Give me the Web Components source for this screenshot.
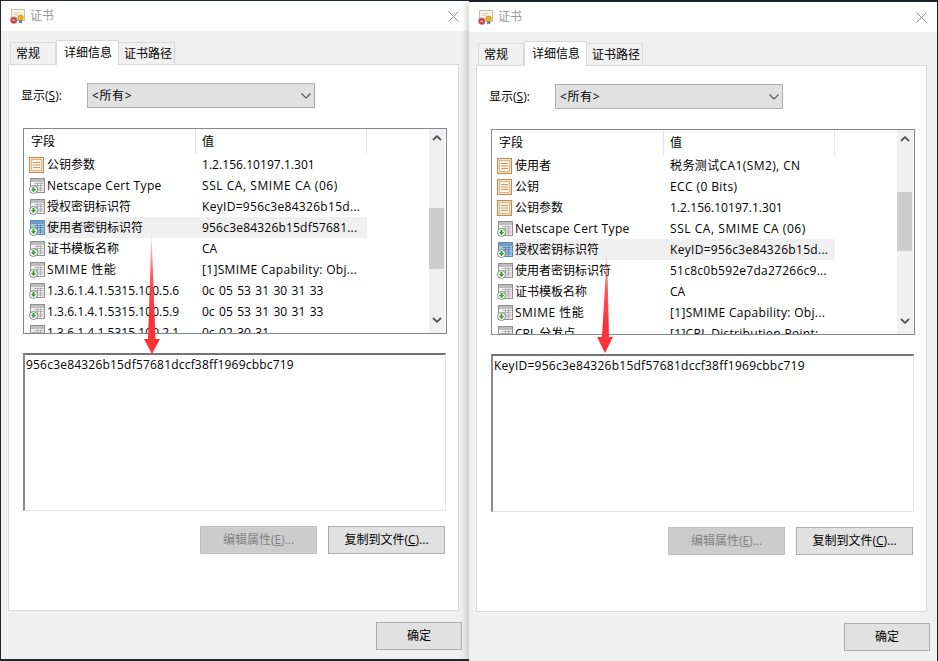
<!DOCTYPE html>
<html lang="zh-CN"><head><meta charset="utf-8"><title>证书</title>
<style>
html,body{margin:0;padding:0;background:#1d2730}
body{width:938px;height:661px;overflow:hidden;font:12px/16px "Open Sans","Noto Sans CJK SC",sans-serif;color:#000}
</style></head><body>
<cert-desktop>
  <cert-window style="left:1px;top:1px;height:658px">
    <cert-tabs></cert-tabs>
    <cert-select slot="select"></cert-select>
    <field-list thumb-top="79" thumb-height="61">
      <field-row icon="prop" name="公钥参数" value="1.2.156.10197.1.301" style="--vls:.05px"></field-row>
      <field-row icon="ext" name="Netscape Cert Type" value="SSL CA, SMIME CA (06)" style="--nls:.33px;--vls:.55px"></field-row>
      <field-row icon="ext" name="授权密钥标识符" value="KeyID=956c3e84326b15d..." style="--vls:.3px"></field-row>
      <field-row icon="ext" selected name="使用者密钥标识符" value="956c3e84326b15df57681..." style="--vls:.2px"></field-row>
      <field-row icon="ext" name="证书模板名称" value="CA"></field-row>
      <field-row icon="ext" name="SMIME 性能" value="[1]SMIME Capability: Obj..." style="--nls:.5px;--vls:.33px"></field-row>
      <field-row icon="ext" name="1.3.6.1.4.1.5315.100.5.6" value="0c 05 53 31 30 31 33" style="--nls:.04px;--vws:1.3px"></field-row>
      <field-row icon="ext" name="1.3.6.1.4.1.5315.100.5.9" value="0c 05 53 31 30 31 33" style="--nls:.04px;--vws:1.3px"></field-row>
      <field-row icon="ext" name="1.3.6.1.4.1.5315.100.2.1" value="0c 02 30 31" style="--nls:.04px;--vws:1.3px"></field-row>
    </field-list>
    <detail-box style="letter-spacing:.2px">956c3e84326b15df57681dccf38ff1969cbbc719</detail-box>
  </cert-window>
  <cert-window style="left:469px;top:2px;height:659px" shadowed>
    <cert-tabs></cert-tabs>
    <cert-select slot="select"></cert-select>
    <field-list thumb-top="62" thumb-height="59">
      <field-row icon="prop" name="使用者" value="税务测试CA1(SM2), CN" style="--vls:.4px"></field-row>
      <field-row icon="prop" name="公钥" value="ECC (0 Bits)" style="--vls:.4px"></field-row>
      <field-row icon="prop" name="公钥参数" value="1.2.156.10197.1.301" style="--vls:.05px"></field-row>
      <field-row icon="ext" name="Netscape Cert Type" value="SSL CA, SMIME CA (06)" style="--nls:.33px;--vls:.55px"></field-row>
      <field-row icon="ext" selected name="授权密钥标识符" value="KeyID=956c3e84326b15d..." style="--vls:.3px"></field-row>
      <field-row icon="ext" name="使用者密钥标识符" value="51c8c0b592e7da27266c9..." style="--vls:.25px"></field-row>
      <field-row icon="ext" name="证书模板名称" value="CA"></field-row>
      <field-row icon="ext" name="SMIME 性能" value="[1]SMIME Capability: Obj..." style="--nls:.5px;--vls:.33px"></field-row>
      <field-row icon="ext" name="CRL 分发点" value="[1]CRL Distribution Point:..." style="--vls:.3px"></field-row>
    </field-list>
    <detail-box style="letter-spacing:.26px">KeyID=956c3e84326b15df57681dccf38ff1969cbbc719</detail-box>
  </cert-window>
  <red-arrow style="left:140px;top:230px" points="11.5,3 15.5,109 20,109 12,124 4,109 8,109"></red-arrow>
  <red-arrow style="left:593px;top:248px" points="14,4 16,89 20,89 12,105 4,89 9,89"></red-arrow>
</cert-desktop>
<script>
const def=(name,html,extra)=>{
  const t=document.createElement('template');t.innerHTML=html;
  customElements.define(name,class extends HTMLElement{
    constructor(){super();this.attachShadow({mode:'open'}).appendChild(t.content.cloneNode(true));}
    connectedCallback(){if(extra)extra.call(this,this.shadowRoot);}
  });
};
def('cert-desktop',`<style>:host{display:block;position:relative;width:938px;height:661px;overflow:hidden}</style><slot></slot>`);

def('cert-icon',`<style>:host{display:block;width:16px;height:16px;flex:none}svg{display:block}</style>
<svg width="16" height="16" viewBox="0 0 16 16"></svg>`,function(r){
  const k=this.getAttribute('kind'),s=r.querySelector('svg');
  if(k==='prop'||k==='prop-sel'){
    s.innerHTML=`<rect x=".5" y=".5" width="14" height="15" fill="#fbe0c2" stroke="#bf8a55"/>
    <rect x="2.5" y="2.5" width="10" height="11" fill="#fff4e6" stroke="#dcb287"/>
    <path d="M4 5.5h7M4 8h7M4 10.5h7" stroke="#c99a68" stroke-width="1"/>`;
  }else if(k==='title'){
    s.innerHTML=`<rect x="1.5" y="1.5" width="13" height="11" fill="#f6f2e6" stroke="#c9bfa6"/>
    <path d="M4 4.5h6M4 6.5h4" stroke="#d8d2c2"/>
    <path d="M9.5 12l-.7 3.5 1.8-1 1.8 1-.7-3.5z" fill="#3f6fc4"/>
    <circle cx="10.5" cy="9.8" r="2.8" fill="#e6b422" stroke="#b98a14" stroke-width=".6"/>
    <circle cx="3.8" cy="12.2" r="3.3" fill="#d8343c" stroke="#8f8f8f" stroke-width=".7"/>
    <path d="M2.4 12.2h2.8" stroke="#fff" stroke-width="1"/>`;
  }else{
    const sel=k==='ext-sel';
    const st=sel?'#5f8db8':'#8f8f8f',fl=sel?'#a9c8e4':'#f1f1f1',hd=sel?'#6f9cc6':'#bdbdbd',ln=sel?'#4f7ea8':'#a5a5a5';
    s.innerHTML=`<rect x="1.5" y=".5" width="14" height="14" fill="${fl}" stroke="${st}"/>
    <rect x="2" y="1" width="13" height="3" fill="${hd}"/>
    <path d="M5.5 5.5h9M5.5 7.5h9M8.5 10h6M8.5 12h6M8.5 4.5v9M11.5 4.5v9" stroke="${ln}" stroke-width=".8"/>
    <circle cx="4.5" cy="11.5" r="4" fill="#fff" stroke="#8a8a8a"/>
    <path d="M4.5 8.8v3" stroke="#2fa32f" stroke-width="2"/><path d="M1.9 11.1h5.2L4.5 14.2z" fill="#2fa32f"/>`;
  }
});

def('cert-tabs',`<style>
:host{display:flex;align-items:flex-end;height:24px;padding-left:2px;position:relative;z-index:1}
.t{box-sizing:border-box;height:22px;border:1px solid #d9d9d9;border-bottom:0;background:#f0f0f0;padding-left:5px;line-height:22px;white-space:nowrap}
.a{height:25px;margin-bottom:-1px;background:#fff;padding-left:7px;border-bottom:0;line-height:23px;width:63px}
.n{border-left:0}
</style><div class="t" style="width:46px">常规</div><div class="t a">详细信息</div><div class="t n" style="width:56px;padding-left:5px">证书路径</div>`);

def('cert-select',`<style>
:host{display:flex;align-items:center;height:25px;width:228px;box-sizing:border-box;background:#e1e1e1;border:1px solid #adadad;padding:0 3px 0 4px;justify-content:space-between}
span{letter-spacing:.6px;padding-top:1px}
</style><span>&lt;所有&gt;</span><svg width="10" height="6" viewBox="0 0 10 6"><path d="M.5 .5L5 5 9.5 .5" fill="none" stroke="#555" stroke-width="1.1"/></svg>`);

def('field-row',`<style>
:host{display:flex;height:21px;align-items:center;padding-left:5px;white-space:nowrap}
.c{display:flex;align-items:center;height:21px;box-sizing:border-box;overflow:hidden}
.n{width:151px;padding-left:2px;letter-spacing:var(--nls,0)}
.v{width:171px;padding-left:6px;letter-spacing:var(--vls,0);word-spacing:var(--vws,0)}
.ic{width:16px;flex:none}
:host([selected]) .c{background:#f0f0f0}
</style><div class="ic"></div><div class="c n"></div><div class="c v"></div>`,function(r){
  r.querySelector('.n').textContent=this.getAttribute('name');
  r.querySelector('.v').textContent=this.getAttribute('value');
  const k=this.getAttribute('icon');
  const ic=document.createElement('cert-icon');
  ic.setAttribute('kind',this.hasAttribute('selected')?k+'-sel':k);
  r.querySelector('.ic').replaceChildren(ic);
});

def('field-list',`<style>
:host{display:flex;box-sizing:border-box;width:424px;height:206px;margin:20px 0 0 2px;border:1px solid #828790;background:#fff;padding-right:1px;overflow:hidden}
.m{width:405px;display:flex;flex-direction:column;overflow:hidden}
.h{display:flex;height:25px;flex:none;line-height:26px}
.h div{box-sizing:border-box;height:25px;border-right:1px solid #e5e5e5;padding-left:7px}
.s{width:16px;background:#f0f0f0;position:relative;display:flex;flex-direction:column;justify-content:space-between;height:204px}
.th{position:absolute;left:0;width:15px;background:#cdcdcd}
.ar{display:flex;justify-content:center;padding:6px 1px 0 0;height:11px;position:relative}
.ar.b{padding:0 1px 5px 0}
</style>
<div class="m"><div class="h"><div style="width:172px">字段</div><div style="width:171px;padding-left:6px">值</div></div><slot></slot></div>
<div class="s"><div class="th"></div>
<div class="ar"><svg width="10" height="6" viewBox="0 0 10 6"><path d="M1 5L5 1.2 9 5" fill="none" stroke="#505050" stroke-width="1.8"/></svg></div>
<div class="ar b"><svg width="10" height="6" viewBox="0 0 10 6"><path d="M1 1L5 4.8 9 1" fill="none" stroke="#505050" stroke-width="1.8"/></svg></div></div>`,function(r){
  const t=r.querySelector('.th');t.style.top=this.getAttribute('thumb-top')+'px';t.style.height=this.getAttribute('thumb-height')+'px';
});

def('detail-box',`<style>
:host{display:block;box-sizing:border-box;width:423px;height:158px;margin:19px 0 0 2px;background:#fff;border:1px solid #e3e3e3;border-top:2px solid #737373;border-left:2px solid #8a8a8a;padding:1px 0 0 1px;line-height:17px}
</style><slot></slot>`);

def('win-button',`<style>
:host{display:flex;align-items:center;justify-content:center;box-sizing:border-box;width:117px;height:28px;background:#e1e1e1;border:1px solid #adadad;white-space:nowrap}
:host([disabled]){background:#ccc;border-color:#bfbfbf;color:#838383}
</style><slot></slot>`);

def('cert-window',`<style>
:host{position:absolute;display:flex;flex-direction:column;box-sizing:border-box;width:468px;background:#f0f0f0}
:host([shadowed]){box-shadow:0 0 9px rgba(0,0,0,.3)}
.bar{display:flex;align-items:center;height:30px;flex:none;background:#fff;padding:0 10px 0 9px;color:#999;gap:4px}
.ttl{flex:1}
.body{flex:1;display:flex;flex-direction:column;padding:9px 10px 0 7px;min-height:0}
.panel{box-sizing:border-box;height:547px;background:#fff;border:1px solid #d9d9d9;padding:18px 12px 0;flex:none}
.row{display:flex;align-items:center;height:25px}
.lb{width:66px;padding-top:1px}
.btns{display:flex;justify-content:flex-end;gap:11px;width:422px;margin:15px 0 0 2px}
.foot{flex:1;display:flex;justify-content:flex-end;padding:11px 0 0;margin-right:-3px}
.foot win-button{width:86px}
u{text-decoration-thickness:1px}
</style>
<div class="bar"><cert-icon kind="title"></cert-icon><span class="ttl">证书</span>
<svg width="11" height="11" viewBox="0 0 11 11"><path d="M.5 .5l10 10M10.5 .5l-10 10" stroke="#8c8c8c" stroke-width="1" fill="none"/></svg></div>
<div class="body"><slot name="tabs"></slot>
<div class="panel">
  <div class="row"><span class="lb">显示(<u>S</u>):</span><slot name="select"></slot></div>
  <slot name="content"></slot>
  <div class="btns"><win-button disabled>编辑属性(<u>E</u>)...</win-button><win-button>复制到文件(<u>C</u>)...</win-button></div>
</div>
<div class="foot"><win-button>确定</win-button></div>
</div>`,function(r){
  const old=r.querySelector('.bar cert-icon'),ic=document.createElement('cert-icon');
  ic.setAttribute('kind','title');old.replaceWith(ic);
  for(const c of this.children){
    const n=c.localName;
    if(n==='cert-tabs')c.slot='tabs';
    if(n==='field-list'||n==='detail-box')c.slot='content';
  }
});

def('red-arrow',`<style>:host{position:absolute;display:block;width:24px;height:130px}svg{display:block}</style>
<svg width="24" height="130" viewBox="0 0 24 130"><defs></defs><polygon></polygon></svg>`,function(r){
  const id='g'+Math.random().toString(36).slice(2);
  r.querySelector('defs').innerHTML=`<linearGradient id="${id}" x1="0" y1="0" x2="0" y2="1"><stop offset="0" stop-color="#ff3c3c" stop-opacity=".15"/><stop offset=".35" stop-color="#ff3c3c" stop-opacity=".85"/><stop offset=".7" stop-color="#fb3238"/></linearGradient>`;
  const p=r.querySelector('polygon');p.setAttribute('points',this.getAttribute('points'));p.setAttribute('fill',`url(#${id})`);
});
</script>
</body></html>
